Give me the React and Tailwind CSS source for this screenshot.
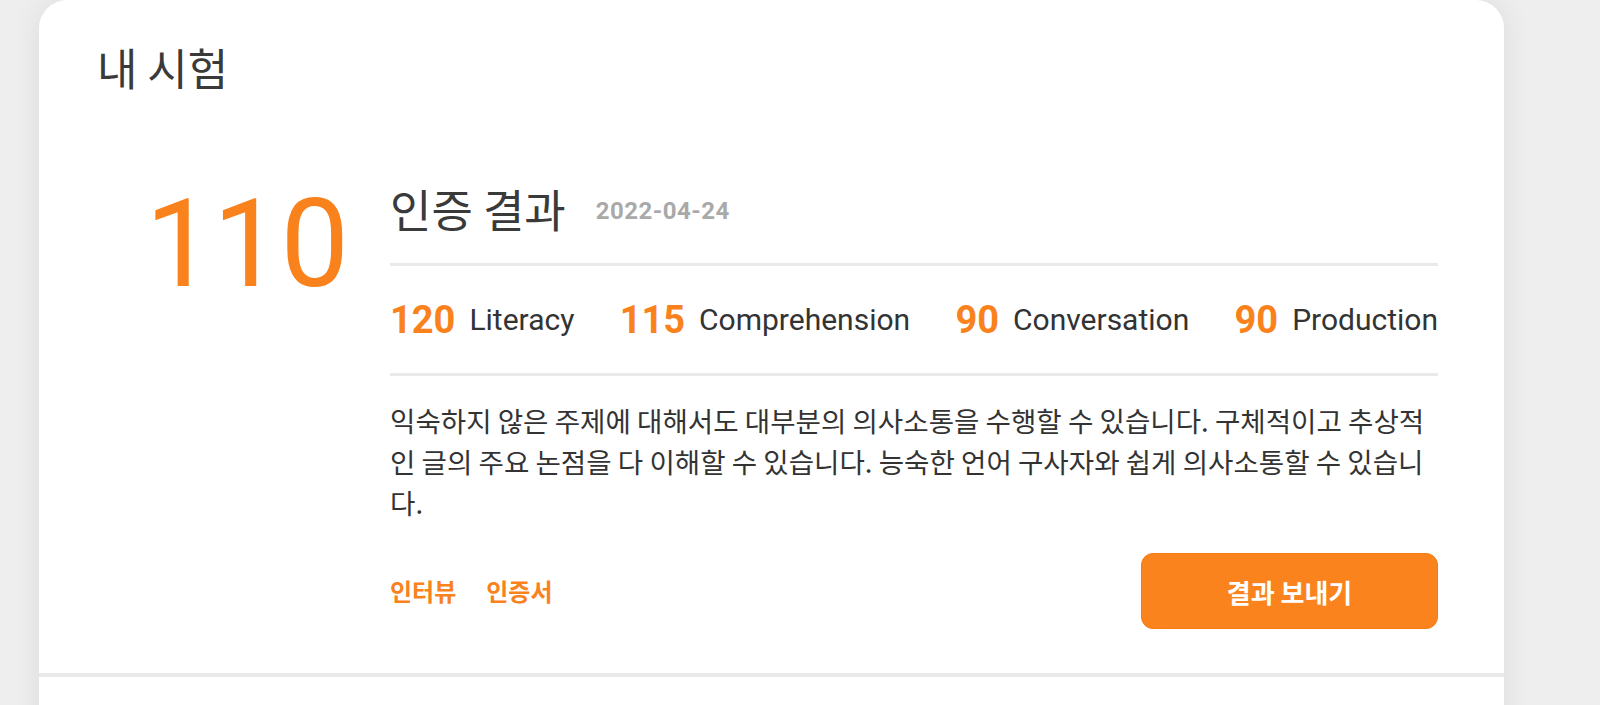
import React from "react";

const KR = "font-['Noto_Sans_CJK_KR',sans-serif]";
const NUM = "font-['Roboto','Noto_Sans_CJK_KR',sans-serif]";

const scores = [
  { value: 120, label: "Literacy" },
  { value: 115, label: "Comprehension" },
  { value: 90, label: "Conversation" },
  { value: 90, label: "Production" },
];

const ScoreItem = ({ value, label }) => (
  <div className="flex items-center gap-[14px]">
    <span className={`${NUM} text-[38px] font-bold leading-none text-[#f9821d]`}>
      {value}
    </span>
    <span className={`${NUM} text-[30px] leading-none text-[#333333]`}>
      {label}
    </span>
  </div>
);

export default function App() {
  return (
    <div className="h-[705px] w-full overflow-hidden bg-[#eeeeee]">
      <div className="ml-[39px] w-[1465px] rounded-t-[28px] bg-white shadow-[0_0_30px_rgba(0,0,0,0.08)]">
        <h1
          className={`${KR} pl-[58px] pt-[37px] text-[44px] font-normal leading-[60px] text-[#3a3a3a]`}
        >
          내 시험
        </h1>

        <div className="flex border-b-4 border-[#e9e9e9] pl-[58px] pr-[66px] pt-[82px] pb-[44px]">
          <div className="w-[293px] shrink-0 pr-[42px] pt-[5px] text-right">
            <span
              className={`${NUM} text-[122px] font-normal leading-none tracking-[-1px] text-[#f9821d]`}
            >
              110
            </span>
          </div>

          <div className="flex w-[1048px] flex-col">
            <div className="flex items-center gap-[30px]">
              <h2
                className={`${KR} text-[45px] font-normal leading-[60px] text-[#3a3a3a]`}
              >
                인증 결과
              </h2>
              <span
                className={`${NUM} pt-[4px] text-[24px] font-bold tracking-[0.5px] text-[#a9a9a9]`}
              >
                2022-04-24
              </span>
            </div>

            <div className="mt-[24px] h-[3px] bg-[#e9e9e9]" />

            <div className="flex h-[107px] items-center justify-between">
              {scores.map((s) => (
                <ScoreItem key={s.label} value={s.value} label={s.label} />
              ))}
            </div>

            <div className="h-[3px] bg-[#e9e9e9]" />

            <p
              className={`${KR} mt-[24px] text-[27.6px] leading-[41px] text-[#333333]`}
            >
              익숙하지 않은 주제에 대해서도 대부분의 의사소통을 수행할 수
              있습니다. 구체적이고 추상적인 글의 주요 논점을 다 이해할 수
              있습니다. 능숙한 언어 구사자와 쉽게 의사소통할 수 있습니다.
            </p>

            <div className="mt-[30px] flex items-center justify-between">
              <div
                className={`${KR} flex gap-[30px] text-[24px] font-bold text-[#f9821d]`}
              >
                <a href="#">인터뷰</a>
                <a href="#">인증서</a>
              </div>
              <button
                className={`${KR} h-[76px] w-[297px] rounded-[12px] border border-[#f57a12] bg-[#fa831e] text-[26px] font-bold text-white`}
              >
                결과 보내기
              </button>
            </div>
          </div>
        </div>

        <div className="h-[60px] bg-white" />
      </div>
    </div>
  );
}
